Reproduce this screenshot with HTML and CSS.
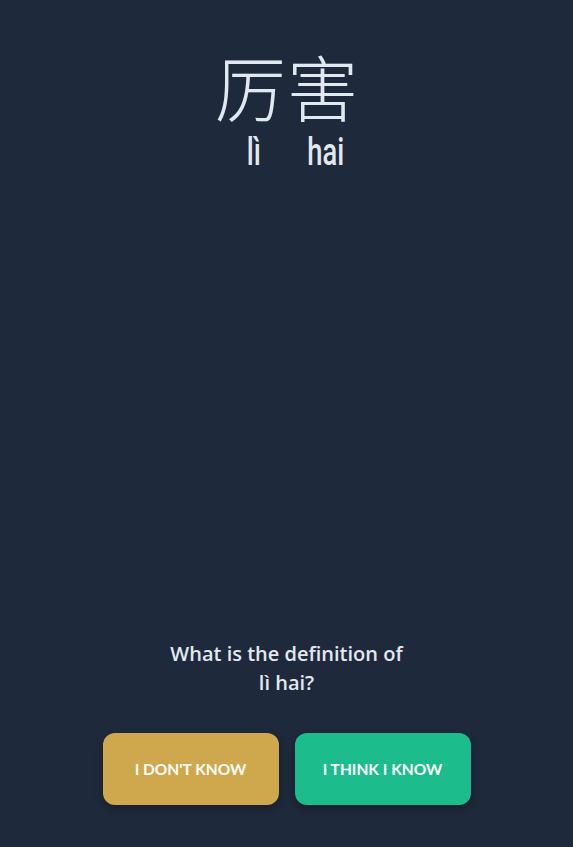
FILE: index.html
```html
<!DOCTYPE html>
<html>
<head>
<meta charset="utf-8">
<link rel="stylesheet" href="styles.css">
</head>
<body>
<main class="card">
  <header class="word">
    <div class="hanzi"><span class="syl">厉</span><span class="syl">害</span></div>
    <div class="pinyin"><span class="syl"><span class="py">lì</span></span><span class="syl"><span class="py">hai</span></span></div>
  </header>
  <section class="prompt">
    <p class="question">What is the definition of<br>lì hai?</p>
    <div class="actions">
      <button class="btn btn-unknown">I DON'T KNOW</button>
      <button class="btn btn-know">I THINK I KNOW</button>
    </div>
  </section>
</main>
</body>
</html>
```
FILE: styles.css
```css
html, body {
  margin: 0;
  padding: 0;
  background: #1e293b;
}
.card {
  height: 847px;
  display: flex;
  flex-direction: column;
  justify-content: space-between;
  align-items: center;
  color: #e2e8f0;
  font-family: "Open Sans", "Noto Sans", sans-serif;
}
.word {
  padding-top: 49px;
  display: flex;
  flex-direction: column;
  align-items: center;
}
.hanzi {
  display: flex;
  font-family: "Noto Sans CJK SC", sans-serif;
  font-size: 72px;
  line-height: 72px;
  font-weight: 300;
}
.hanzi .syl, .pinyin .syl {
  width: 72px;
  text-align: center;
}
.pinyin {
  display: flex;
  font-family: "Roboto", sans-serif;
  font-weight: 500;
  font-size: 38px;
  line-height: 38px;
  margin-top: 12px;
  padding-left: 7px;
}
.py {
  display: inline-block;
  transform: scaleX(0.72);
}
.prompt {
  display: flex;
  flex-direction: column;
  align-items: center;
  padding-bottom: 42px;
}
.question {
  margin: 0 0 36px;
  text-align: center;
  font-size: 20px;
  line-height: 29px;
  font-weight: 600;
}
.actions {
  display: flex;
  gap: 16px;
}
.btn {
  width: 176px;
  height: 72px;
  border: none;
  border-radius: 12px;
  color: #ffffff;
  font-family: "Lato", sans-serif;
  font-weight: 700;
  font-size: 15.5px;
  box-shadow: 0 4px 8px rgba(0, 0, 0, 0.25);
}
.btn-unknown {
  background: #cfa84d;
}
.btn-know {
  background: #1dbc8c;
}
```
